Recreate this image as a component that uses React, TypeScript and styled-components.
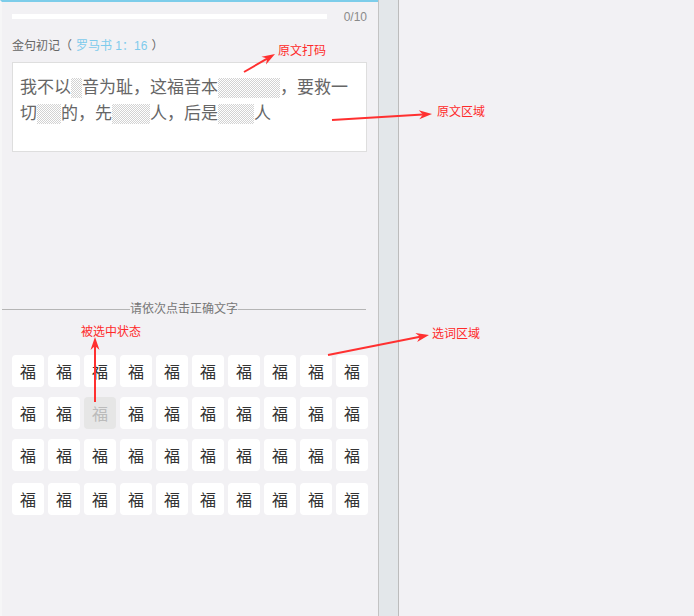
import styled, { createGlobalStyle } from 'styled-components';

const GlobalStyle = createGlobalStyle`
	html, body {
		margin: 0;
		padding: 0;
		background: #f2f1f4;
	}

	body {
		font-family: "Liberation Sans", "Noto Sans CJK SC", sans-serif;
	}
`;

const Page = styled.div`
	position: relative;
	display: flex;
	width: 694px;
	height: 616px;
	overflow: hidden;
	background: #f2f1f4;
`;

const Phone = styled.div`
	width: 378px;
	flex-shrink: 0;
	display: flex;
	flex-direction: column;
	border-top: 2px solid #7dcdea;
	border-left: 2px solid #f6f6f7;
	box-sizing: border-box;
	background: #f2f1f4;
`;

const Scrollbar = styled.div`
	width: 19px;
	flex-shrink: 0;
	background: #e3e7ea;
	border-left: 1px solid #c3c3c3;
	border-right: 1px solid #bcbcbc;
`;

const ProgressRow = styled.div`
	display: flex;
	align-items: center;
	height: 30px;
	padding: 0 11px 0 10px;
`;

const ProgressTrack = styled.div`
	width: 315px;
	height: 5px;
	margin-top: -2px;
	background: #ffffff;
`;

const ProgressCount = styled.span`
	margin-left: auto;
	font-size: 12px;
	color: #8a8a8a;
`;

const Title = styled.div`
	padding: 7px 0 0 10px;
	font-size: 12px;
	line-height: 14px;
	color: #666666;
`;

const Ref = styled.span`
	color: #7ecbec;
	margin: 0 4px;
`;

const TextBox = styled.div`
	margin: 9px 0 0 10px;
	width: 355px;
	height: 90px;
	box-sizing: border-box;
	background: #ffffff;
	border: 1px solid #dedede;
	padding: 12px 6px 0 7px;
	font-size: 17px;
	line-height: 26px;
	color: #666666;
`;

const Line = styled.div`
	display: flex;
	align-items: center;
	white-space: nowrap;
`;

const Mask = styled.span<{ $w: number }>`
	display: inline-block;
	width: ${(p) => p.$w}px;
	height: 20px;
	background: repeating-conic-gradient(#d2d2d2 0 25%, #ffffff 0 50%) 0 0 / 2px 2px;
`;

const Spacer = styled.div`
	height: 150px;
`;

const Divider = styled.div`
	display: flex;
	align-items: center;
	width: 364px;
	font-size: 12px;
	color: #777777;
	line-height: 14px;

	&::before,
	&::after {
		content: "";
		flex: 1;
		height: 1px;
		background: #b5b5b5;
	}
`;

const Grid = styled.div`
	display: flex;
	flex-direction: column;
	gap: 10px;
	padding: 39px 0 0 10px;
`;

const Row = styled.div<{ $extra?: boolean }>`
	display: flex;
	gap: 4px;
	margin-top: ${(p) => (p.$extra ? 2 : 0)}px;
`;

const CharButton = styled.div<{ $picked?: boolean }>`
	width: 32px;
	height: 32px;
	border-radius: 4px;
	display: flex;
	align-items: center;
	justify-content: center;
	font-size: 16px;
	background: ${(p) => (p.$picked ? '#e6e6e6' : '#ffffff')};
	color: ${(p) => (p.$picked ? '#bbbbbb' : '#333333')};
`;

const Note = styled.span<{ $x: number; $y: number }>`
	position: absolute;
	left: ${(p) => p.$x}px;
	top: ${(p) => p.$y}px;
	font-size: 12px;
	line-height: 14px;
	color: #ff2a2a;
	white-space: nowrap;
`;

const Arrows = styled.svg`
	position: absolute;
	left: 0;
	top: 0;
	pointer-events: none;
`;

const arrow = (x1: number, y1: number, x2: number, y2: number, key: string) => {
	const a = Math.atan2(y2 - y1, x2 - x1);
	const len = 13;
	const half = 4.5;
	const bx = x2 - len * Math.cos(a);
	const by = y2 - len * Math.sin(a);
	const nx = -Math.sin(a) * half;
	const ny = Math.cos(a) * half;
	const mx = x2 - len * 0.7 * Math.cos(a);
	const my = y2 - len * 0.7 * Math.sin(a);
	return (
		<g key={key} fill="#ff3030" stroke="#ff3030">
			<line x1={x1} y1={y1} x2={mx} y2={my} strokeWidth={2} />
			<polygon points={`${x2},${y2} ${bx + nx},${by + ny} ${mx},${my} ${bx - nx},${by - ny}`} stroke="none" />
		</g>
	);
};

const rows = [0, 1, 2, 3];
const cols = [0, 1, 2, 3, 4, 5, 6, 7, 8, 9];

const App = () => {
	return (
		<>
			<GlobalStyle />
			<Page>
				<Phone>
					<ProgressRow>
						<ProgressTrack />
						<ProgressCount>0/10</ProgressCount>
					</ProgressRow>
					<Title>
						金句初记（<Ref>罗马书 1：16</Ref>）
					</Title>
					<TextBox>
						<Line>
							<span>我不以</span><Mask $w={11} /><span>音为耻，这福音本</span><Mask $w={62} /><span>，要救一</span>
						</Line>
						<Line>
							<span>切</span><Mask $w={24} /><span>的，先</span><Mask $w={38} /><span>人，后是</span><Mask $w={36} /><span>人</span>
						</Line>
					</TextBox>
					<Spacer />
					<Divider>请依次点击正确文字</Divider>
					<Grid>
						{rows.map((r) => (
							<Row key={r} $extra={r === 3}>
								{cols.map((c) => (
									<CharButton key={c} $picked={r === 1 && c === 2}>福</CharButton>
								))}
							</Row>
						))}
					</Grid>
				</Phone>
				<Scrollbar />

				<Arrows width={694} height={616}>
					{arrow(244, 72, 275, 54, 'a')}
					{arrow(332, 120, 432, 114, 'b')}
					{arrow(95, 402, 95, 337, 'c')}
					{arrow(328, 355, 429, 335, 'd')}
				</Arrows>
				<Note $x={278} $y={44}>原文打码</Note>
				<Note $x={437} $y={105}>原文区域</Note>
				<Note $x={81} $y={325}>被选中状态</Note>
				<Note $x={432} $y={327}>选词区域</Note>
			</Page>
		</>
	);
};

export default App;
